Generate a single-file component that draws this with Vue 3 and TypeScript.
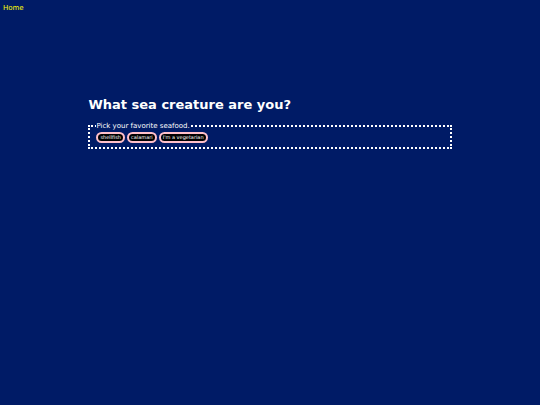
<script setup lang="ts">
import { ref } from 'vue'

const answers: string[] = ['shellfish', 'calamari', "I'm a vegetarian"]
const picked = ref<string | null>(null)
</script>

<template>
  <div class="page">
    <nav>
      <a href="#home">Home</a>
    </nav>
    <main>
      <h1>What sea creature are you?</h1>
      <fieldset>
        <legend>Pick your favorite seafood.</legend>
        <div class="answers">
          <button
            v-for="answer in answers"
            :key="answer"
            type="button"
            :aria-pressed="picked === answer"
            @click="picked = answer"
          >
            {{ answer }}
          </button>
        </div>
      </fieldset>
    </main>
  </div>
</template>

<style>
body {
  margin: 0;
  background: #001b66;
}
</style>

<style scoped>
.page {
  padding: 3px;
  color: #fff;
  font-family: Verdana, "DejaVu Sans", sans-serif;
  font-size: 7px;
}

nav {
  line-height: 10px;
}

nav a {
  color: #ff0;
  text-decoration: none;
}

main {
  width: 68%;
  margin: 83px auto 0;
}

h1 {
  margin: 0 0 8px;
  font-size: 13px;
  line-height: 17px;
}

fieldset {
  margin: 0;
  padding: 1px 6px 4px;
  border: 2px dotted #fff;
}

legend {
  padding: 0;
  line-height: 10px;
}

.answers {
  display: flex;
  flex-wrap: wrap;
  gap: 2px;
}

button {
  padding: 1px 2px;
  border: 2px solid #ffc0cb;
  border-radius: 6px;
  background: #000;
  color: #fff;
  font-family: inherit;
  font-size: 5px;
  line-height: 5px;
}
</style>
